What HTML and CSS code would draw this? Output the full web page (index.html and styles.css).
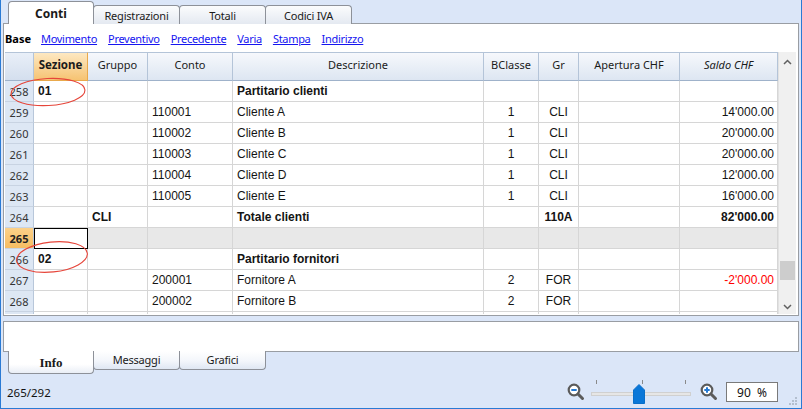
FILE: index.html
```html
<!DOCTYPE html>
<html lang="it">
<head>
<meta charset="utf-8">
<title>Conti</title>
<link rel="stylesheet" href="styles.css">
</head>
<body>
<div class="window">
  <div class="tabbar top">
    <div class="tab active">Conti</div>
    <div class="tab">Registrazioni</div>
    <div class="tab">Totali</div>
    <div class="tab">Codici IVA</div>
  </div>

  <div class="panel main">
    <div class="views">
      <b class="base">Base</b>
      <a>Movimento</a>
      <a>Preventivo</a>
      <a>Precedente</a>
      <a>Varia</a>
      <a>Stampa</a>
      <a>Indirizzo</a>
    </div>

    <div class="gridwrap">
      <div class="grid">
        <div class="row head">
          <div class="c rn"></div>
          <div class="c hsel">Sezione</div>
          <div class="c">Gruppo</div>
          <div class="c">Conto</div>
          <div class="c">Descrizione</div>
          <div class="c">BClasse</div>
          <div class="c">Gr</div>
          <div class="c">Apertura CHF</div>
          <div class="c it">Saldo CHF</div>
        </div>

        <div class="row">
          <div class="c rn">258</div><div class="c b">01</div><div class="c"></div><div class="c"></div>
          <div class="c b">Partitario clienti</div><div class="c ctr"></div><div class="c ctr"></div><div class="c"></div><div class="c r"></div>
        </div>
        <div class="row">
          <div class="c rn">259</div><div class="c"></div><div class="c"></div><div class="c">110001</div>
          <div class="c">Cliente A</div><div class="c ctr">1</div><div class="c ctr">CLI</div><div class="c"></div><div class="c r">14'000.00</div>
        </div>
        <div class="row">
          <div class="c rn">260</div><div class="c"></div><div class="c"></div><div class="c">110002</div>
          <div class="c">Cliente B</div><div class="c ctr">1</div><div class="c ctr">CLI</div><div class="c"></div><div class="c r">20'000.00</div>
        </div>
        <div class="row">
          <div class="c rn">261</div><div class="c"></div><div class="c"></div><div class="c">110003</div>
          <div class="c">Cliente C</div><div class="c ctr">1</div><div class="c ctr">CLI</div><div class="c"></div><div class="c r">20'000.00</div>
        </div>
        <div class="row">
          <div class="c rn">262</div><div class="c"></div><div class="c"></div><div class="c">110004</div>
          <div class="c">Cliente D</div><div class="c ctr">1</div><div class="c ctr">CLI</div><div class="c"></div><div class="c r">12'000.00</div>
        </div>
        <div class="row">
          <div class="c rn">263</div><div class="c"></div><div class="c"></div><div class="c">110005</div>
          <div class="c">Cliente E</div><div class="c ctr">1</div><div class="c ctr">CLI</div><div class="c"></div><div class="c r">16'000.00</div>
        </div>
        <div class="row">
          <div class="c rn">264</div><div class="c"></div><div class="c b">CLI</div><div class="c"></div>
          <div class="c b">Totale clienti</div><div class="c ctr"></div><div class="c ctr b">110A</div><div class="c"></div><div class="c r b">82'000.00</div>
        </div>
        <div class="row current">
          <div class="c rn">265</div><div class="c cursor"></div><div class="c"></div><div class="c"></div>
          <div class="c"></div><div class="c"></div><div class="c"></div><div class="c"></div><div class="c"></div>
        </div>
        <div class="row">
          <div class="c rn">266</div><div class="c b">02</div><div class="c"></div><div class="c"></div>
          <div class="c b">Partitario fornitori</div><div class="c ctr"></div><div class="c ctr"></div><div class="c"></div><div class="c r"></div>
        </div>
        <div class="row">
          <div class="c rn">267</div><div class="c"></div><div class="c"></div><div class="c">200001</div>
          <div class="c">Fornitore A</div><div class="c ctr">2</div><div class="c ctr">FOR</div><div class="c"></div><div class="c r neg">-2'000.00</div>
        </div>
        <div class="row">
          <div class="c rn">268</div><div class="c"></div><div class="c"></div><div class="c">200002</div>
          <div class="c">Fornitore B</div><div class="c ctr">2</div><div class="c ctr">FOR</div><div class="c"></div><div class="c r"></div>
        </div>
        <div class="row">
          <div class="c rn"></div><div class="c"></div><div class="c"></div><div class="c"></div>
          <div class="c"></div><div class="c"></div><div class="c"></div><div class="c"></div><div class="c"></div>
        </div>

        <svg class="marks" width="200" height="262" viewBox="0 0 200 262">
          <ellipse cx="43" cy="40" rx="37" ry="13.5" transform="rotate(-3 43 40)" />
          <ellipse cx="47" cy="205" rx="35.5" ry="15" transform="rotate(-6 47 205)" />
        </svg>
      </div>

      <div class="vscroll">
        <svg class="arrow" width="17" height="14" viewBox="0 0 17 14"><path d="M5 9 L8.5 5.5 L12 9" /></svg>
        <div class="track"><div class="thumb"></div></div>
        <svg class="arrow" width="17" height="14" viewBox="0 0 17 14"><path d="M5 5 L8.5 8.5 L12 5" /></svg>
      </div>
    </div>
  </div>

  <div class="panel info"></div>

  <div class="tabbar bottom">
    <div class="tab active">Info</div>
    <div class="tab">Messaggi</div>
    <div class="tab">Grafici</div>
  </div>

  <div class="status">
    <span class="pos">265/292</span>
    <div class="zoom">
      <svg class="mag" width="18" height="18" viewBox="0 0 18 18">
        <circle cx="7" cy="7" r="5.3" />
        <path class="handle" d="M11 11 L15.5 15.5" />
        <path class="sign" d="M4.3 7 H9.7" />
      </svg>
      <div class="slider">
        <span class="tick t1"></span><span class="tick t2"></span><span class="tick t3"></span>
        <div class="strack"></div>
        <svg class="sthumb" width="12" height="20" viewBox="0 0 12 20"><path d="M0.5 6 L6 0.5 L11.5 6 V19.5 H0.5 Z" /></svg>
      </div>
      <svg class="mag" width="18" height="18" viewBox="0 0 18 18">
        <circle cx="7" cy="7" r="5.3" />
        <path class="handle" d="M11 11 L15.5 15.5" />
        <path class="sign" d="M4.3 7 H9.7 M7 4.3 V9.7" />
      </svg>
      <div class="pct">90&nbsp;&nbsp;%</div>
    </div>
    <svg class="grip" width="8" height="8" viewBox="0 0 8 8">
      <rect x="6" y="0" width="2" height="2" /><rect x="3" y="3" width="2" height="2" /><rect x="6" y="3" width="2" height="2" />
      <rect x="0" y="6" width="2" height="2" /><rect x="3" y="6" width="2" height="2" /><rect x="6" y="6" width="2" height="2" />
    </svg>
  </div>
</div>
</body>
</html>
```

FILE: styles.css
```css
* { box-sizing: border-box; }

html, body {
  margin: 0;
  padding: 0;
  background: #dbe6f8;
}

body {
  font-family: "Noto Sans", "Open Sans", sans-serif;
  font-size: 11px;
  color: #111;
}

.window {
  width: 802px;
  height: 409px;
  background: #dbe6f8;
  border-left: 1px solid #2a7ad4;
  border-right: 1px solid #2a7ad4;
  border-bottom: 1px solid #2a7ad4;
  padding: 0 2px;
  display: flex;
  flex-direction: column;
  overflow: hidden;
}

/* ---------- tabs ---------- */
.tabbar {
  display: flex;
  padding-left: 5px;
  position: relative;
  z-index: 2;
}

.tabbar.top {
  height: 24px;
  align-items: flex-end;
  margin-bottom: -1px;
}

.tab {
  width: 87px;
  height: 19px;
  margin-left: -1px;
  border: 1px solid #8d9199;
  background: linear-gradient(#fbfcfd, #e4e9f1);
  display: flex;
  align-items: center;
  justify-content: center;
  font-size: 11px;
  letter-spacing: -0.2px;
  color: #1a1a1a;
}

.tab:first-child { margin-left: 0; width: 86px; }

.tabbar.top .tab {
  border-bottom: none;
  border-radius: 4px 4px 0 0;
}

.tabbar.top .tab.active {
  height: 23px;
  background: #fff;
  font-weight: bold;
  font-size: 12px;
  letter-spacing: 0;
  padding-bottom: 0;
}

.tabbar.bottom {
  height: 23px;
  align-items: flex-start;
  margin-top: -1px;
}

.tabbar.bottom .tab {
  border-top: none;
  border-radius: 0 0 4px 4px;
  background: linear-gradient(#ffffff, #f3f6fb 55%, #dfe7f3);
  padding-bottom: 2px;
}

.tabbar.bottom .tab.active {
  height: 23px;
  background: linear-gradient(#ffffff 60%, #e9eef6);
  font-family: "Liberation Serif", serif;
  font-weight: bold;
  font-size: 13px;
  letter-spacing: 0;
  padding-top: 3px;
}

/* ---------- panels ---------- */
.panel {
  background: #fff;
  border: 1px solid #999da3;
}

.panel.main {
  height: 293px;
  display: flex;
  flex-direction: column;
  flex: none;
}

.panel.info {
  margin-top: 5px;
  height: 31px;
  flex: none;
}

/* ---------- views row ---------- */
.views {
  height: 28px;
  display: flex;
  align-items: center;
  padding-left: 1px;
  padding-top: 1px;
  gap: 11px;
  font-size: 11px;
  letter-spacing: -0.3px;
}

.views .base {
  font-weight: bold;
  color: #000;
  letter-spacing: 0;
  margin-right: -1px;
}

.views a {
  color: #1515f0;
  text-decoration: underline;
  cursor: pointer;
}

/* ---------- grid ---------- */
.gridwrap {
  flex: 1;
  display: flex;
  margin: 0 1px 1px 1px;
  overflow: hidden;
}

.grid {
  position: relative;
  width: 773px;
  overflow: hidden;
}

.row {
  display: grid;
  grid-template-columns: 29px 54px 60px 85px 251px 55px 40px 101px 98px;
  height: 21px;
  font-family: "Liberation Sans", Arial, sans-serif;
  font-size: 12px;
}

.c {
  border-right: 1px solid #d6d6d6;
  border-bottom: 1px solid #d6d6d6;
  display: flex;
  align-items: center;
  padding: 0 4px;
  white-space: nowrap;
  overflow: hidden;
  color: #141414;
}

.c.b { font-weight: bold; }
.c.ctr { justify-content: center; }
.c.r { justify-content: flex-end; padding-right: 3px; }
.c.neg { color: #f00; }

.c.rn {
  background: #dde7f4;
  border-right: 1px solid #b8c7da;
  border-bottom: 1px solid #c8d3e2;
  justify-content: center;
  padding: 1px 0 0 0;
  font-family: "Noto Sans", sans-serif;
  font-size: 11px;
  color: #333;
}

.row.head {
  height: 29px;
  font-family: "Noto Sans", sans-serif;
  font-size: 11px;
}

.row.head .c {
  background: linear-gradient(#f6f8fc, #dde6f2);
  border-top: 1px solid #b4c4d8;
  border-right: 1px solid #b4c4d8;
  border-bottom: 1px solid #9fb2ca;
  justify-content: center;
  padding: 0 0 4px 0;
  color: #1b1b1b;
}

.row.head .c.rn {
  background: linear-gradient(#e9eff8, #d4dfee);
}

.row.head .c.hsel {
  background: linear-gradient(#fde8c2, #f6c372);
  border-right: 1px solid #e9a94c;
  border-bottom: 1px solid #e9a94c;
  font-weight: bold;
  font-size: 11.5px;
}

.row.head .c.it { font-style: italic; }

.row.current .c {
  background: #e8e8e8;
}

.row.current .c.rn {
  background: linear-gradient(#fcd189, #f7bd62);
  font-weight: bold;
  color: #222;
}

.row.current .c.cursor {
  background: #fff;
  border: 1px solid #000;
}

.marks {
  position: absolute;
  left: 0;
  top: 0;
  pointer-events: none;
}

.marks ellipse {
  fill: none;
  stroke: #e6453a;
  stroke-width: 1.1;
}

/* ---------- scrollbar ---------- */
.vscroll {
  width: 18px;
  background: #f0f0f0;
  border-left: 1px solid #e2e2e2;
  display: flex;
  flex-direction: column;
  align-items: center;
  padding-top: 3px;
}

.vscroll .arrow path {
  fill: none;
  stroke: #606060;
  stroke-width: 1.5;
}

.vscroll .track {
  flex: 1;
  width: 100%;
  position: relative;
}

.vscroll .thumb {
  position: absolute;
  left: 1px;
  width: 15px;
  top: 192px;
  height: 19px;
  background: #cdcdcd;
}

/* ---------- status ---------- */
.status {
  flex: 1;
  display: flex;
  align-items: center;
  padding-left: 4px;
  position: relative;
}

.status .pos {
  font-size: 11.5px;
  color: #111;
  margin-top: 2px;
}

.zoom {
  margin-left: auto;
  display: flex;
  align-items: center;
  margin-top: 1px;
}

.mag circle {
  fill: #fff;
  stroke: #5b5b5b;
  stroke-width: 2.2;
}

.mag .handle {
  stroke: #5b5b5b;
  stroke-width: 3;
  stroke-linecap: round;
}

.mag .sign {
  stroke: #2479d3;
  stroke-width: 2;
}

.slider {
  position: relative;
  width: 100px;
  height: 24px;
  margin: 0 9px 0 6px;
}

.tick {
  position: absolute;
  top: 0;
  width: 1px;
  height: 4px;
  background: #8a8a8a;
}
.tick.t1 { left: 5px; }
.tick.t2 { left: 51px; }
.tick.t3 { left: 94px; }

.strack {
  position: absolute;
  left: 0;
  right: 0;
  top: 12px;
  height: 4px;
  background: #e6e6e6;
  border: 1px solid #d0d0d0;
}

.sthumb {
  position: absolute;
  left: 42px;
  top: 4px;
}

.sthumb path {
  fill: #0a77d8;
  stroke: #0a6fc9;
  stroke-width: 1;
}

.pct {
  margin-left: 8px;
  width: 52px;
  height: 20px;
  background: #fff;
  border: 1px solid #7a7a7a;
  display: flex;
  align-items: center;
  justify-content: center;
  font-size: 12px;
  white-space: pre;
  padding-top: 1px;
}

.grip {
  align-self: flex-end;
  margin: 0 2px 3px 11px;
}

.grip rect { fill: #b3bfcf; }
```
